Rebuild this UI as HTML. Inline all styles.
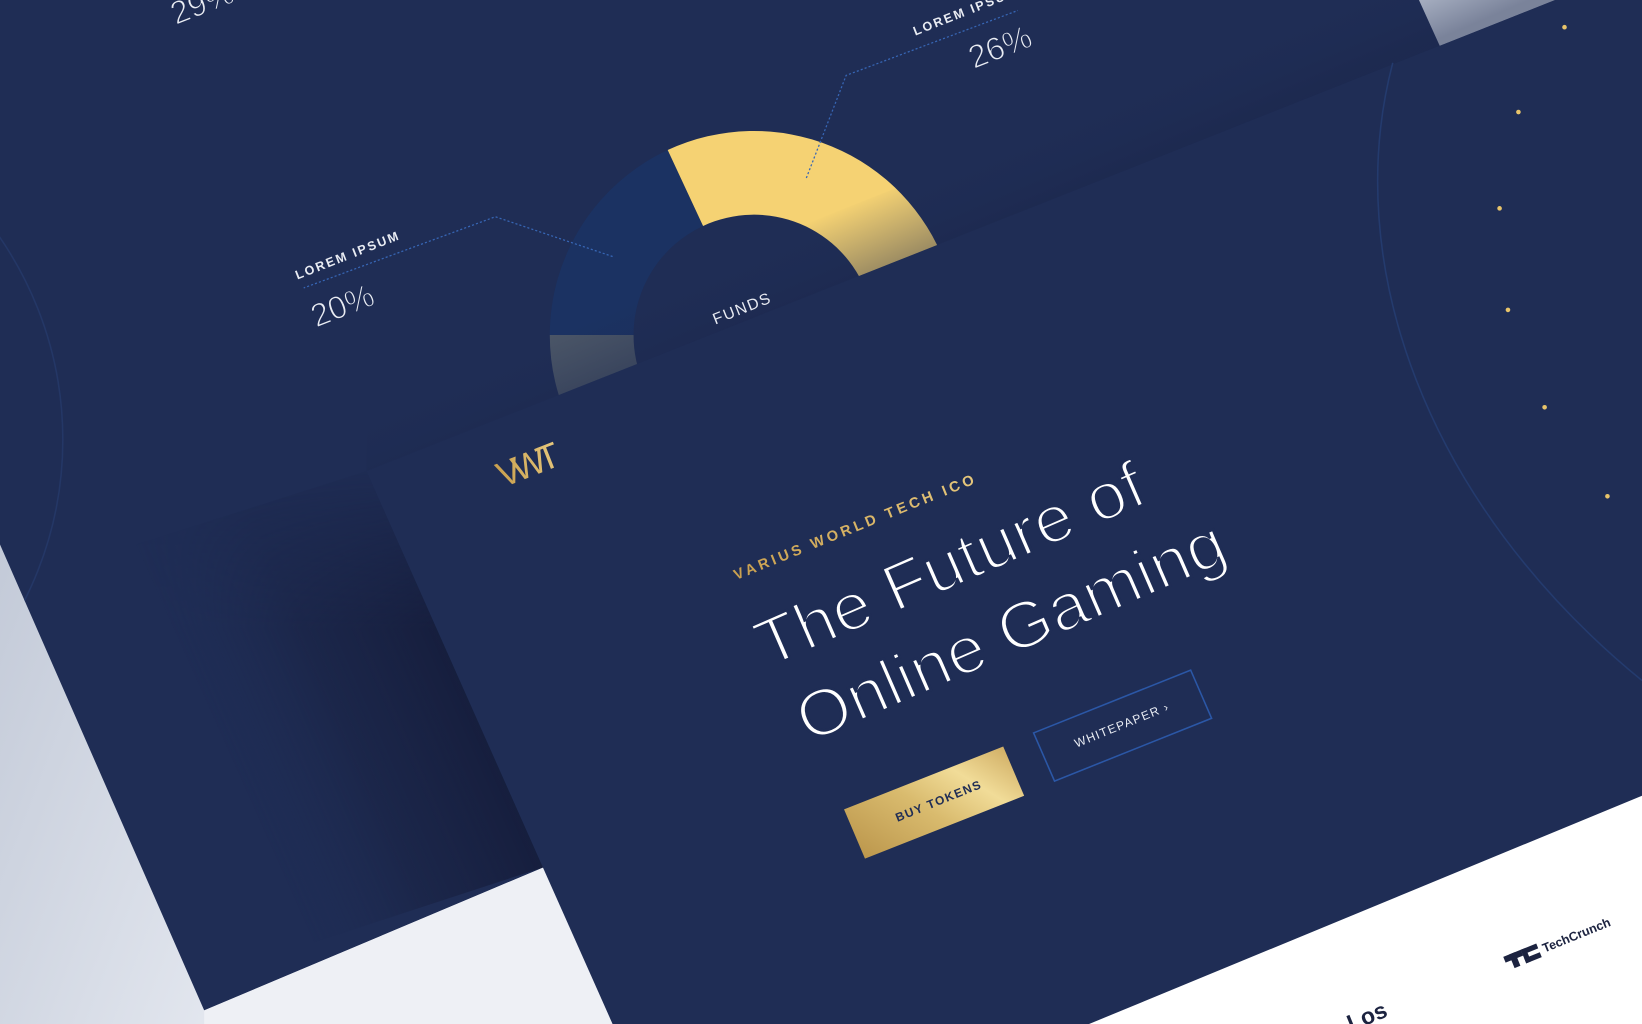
<!DOCTYPE html>
<html><head><meta charset="utf-8"><style>
html,body{margin:0;padding:0;background:#1f2d55;overflow:hidden}
svg{display:block}
text{font-family:"Liberation Sans",sans-serif}
</style></head><body>
<svg width="1642" height="1024" viewBox="0 0 1568 978" preserveAspectRatio="none" xmlns="http://www.w3.org/2000/svg">
<defs>
<linearGradient id="light" x1="0" y1="0" x2="1" y2="0.3">
<stop offset="0" stop-color="#c3cad8"/><stop offset="0.6" stop-color="#e3e7ef"/><stop offset="1" stop-color="#f3f4f8"/>
</linearGradient>
<linearGradient id="gold" x1="0" y1="1" x2="1" y2="0">
<stop offset="0" stop-color="#b89248"/><stop offset="0.45" stop-color="#d9bb6e"/><stop offset="0.7" stop-color="#f1dc98"/><stop offset="1" stop-color="#c9a45a"/>
</linearGradient>
<linearGradient id="goldt" x1="0" y1="0" x2="1" y2="0">
<stop offset="0" stop-color="#c9a04f"/><stop offset="1" stop-color="#e6c77c"/>
</linearGradient>
<linearGradient id="shade" gradientUnits="userSpaceOnUse" x1="435" y1="640" x2="220" y2="735">
<stop offset="0" stop-color="#151c3a" stop-opacity="0.85"/><stop offset="0.5" stop-color="#18203f" stop-opacity="0.5"/><stop offset="1" stop-color="#1f2d55" stop-opacity="0"/>
</linearGradient>
<linearGradient id="fadein" gradientUnits="userSpaceOnUse" x1="0" y1="440" x2="0" y2="600">
<stop offset="0" stop-color="#fff" stop-opacity="0"/><stop offset="1" stop-color="#fff" stop-opacity="1"/>
</linearGradient>
<mask id="m"><rect width="1568" height="978" fill="url(#fadein)"/></mask>
<linearGradient id="topshade" gradientUnits="userSpaceOnUse" x1="900" y1="240" x2="870" y2="170">
<stop offset="0" stop-color="#1a2549" stop-opacity="0.9"/><stop offset="1" stop-color="#1f2d55" stop-opacity="0"/>
</linearGradient>
<clipPath id="back"><polygon points="0,0 1568,0 1568,978 520,828 195,965 0,520"/></clipPath>
</defs>

<rect width="1568" height="978" fill="#1f2d55"/>
<polygon points="0,520 195,965 520,828 585,978 0,978" fill="url(#light)"/>
<polygon points="195,965 520,828 585,978 195,978" fill="#eef0f5"/>
<polygon points="1355,0 1485,0 1375,44" fill="#c9d0dd"/>

<g clip-path="url(#back)">
<circle cx="-280" cy="420" r="340" fill="none" stroke="#243766" stroke-width="1.5"/>
<g transform="translate(720,320)">
<path d="M -195 0 A 195 195 0 0 1 -82.4 -176.7 L -48.6 -104.2 A 115 115 0 0 0 -115 0 Z" fill="#1b3262"/>
<path d="M -82.4 -176.7 A 195 195 0 0 1 183 -67 L 108 -39.5 A 115 115 0 0 0 -48.6 -104.2 Z" fill="#f5d273"/>
<path d="M -195 0 A 195 195 0 0 0 -169 97 L -99.6 57.5 A 115 115 0 0 1 -115 0 Z" fill="#4b5667"/>
</g>
<polygon points="350,450 1485,0 1485,-70 350,380" fill="url(#topshade)" opacity="0.5"/>
<text x="683" y="310" fill="#e9ecf3" font-size="15" letter-spacing="1.5" transform="rotate(-21.5 683 310)">FUNDS</text>
<polyline points="585,245 473,207 290,275" fill="none" stroke="#3766b5" stroke-width="1.2" stroke-dasharray="2 2"/>
<polyline points="770,170 808,72 972,10" fill="none" stroke="#3766b5" stroke-width="1.2" stroke-dasharray="2 2"/>
<text x="284" y="267" fill="#e9ecf3" font-size="12" font-weight="bold" letter-spacing="2" transform="rotate(-21.5 284 267)">LOREM IPSUM</text>
<text x="302" y="313" fill="#e9ecf3" stroke="#1f2d55" stroke-width="1" font-size="31" transform="rotate(-21.5 302 313)">20%</text>
<text x="874" y="34" fill="#e9ecf3" font-size="12" font-weight="bold" letter-spacing="2" transform="rotate(-21.5 874 34)">LOREM IPSUM</text>
<text x="930" y="66" fill="#e9ecf3" stroke="#1f2d55" stroke-width="1" font-size="31" transform="rotate(-21.5 930 66)">26%</text>
<text x="168" y="24" fill="#e9ecf3" stroke="#1f2d55" stroke-width="1" font-size="31" transform="rotate(-21.5 168 24)">29%</text>
<polygon points="350,450 520,828 300,900 130,520" fill="url(#shade)" mask="url(#m)"/>
</g>

<polygon points="350,450 1485,0 1568,0 1568,760 1040,978 585,978" fill="#1f2d55"/>
<polygon points="1040,978 1568,760 1568,978" fill="#ffffff"/>
<path d="M1330 60 C1280 250 1360 480 1568 650" fill="none" stroke="#243b6e" stroke-width="1.5"/>
<g fill="#e8c46a">
<circle cx="1494" cy="26" r="2.2"/><circle cx="1450" cy="107" r="2.2"/><circle cx="1432" cy="199" r="2.2"/>
<circle cx="1440" cy="296" r="2.2"/><circle cx="1475" cy="389" r="2.2"/><circle cx="1535" cy="474" r="2.2"/>
</g>

<text x="480" y="466" fill="url(#goldt)" font-size="34" font-family="Liberation Serif" letter-spacing="-7" transform="rotate(-21.5 480 466)">VWT</text>

<text x="703" y="554" fill="url(#goldt)" font-size="14" font-weight="bold" letter-spacing="4" textLength="250" transform="rotate(-22 703 554)">VARIUS WORLD TECH ICO</text>
<g fill="#ffffff" stroke="#1f2d55" stroke-width="2.5" font-size="63">
<text x="733" y="638" textLength="398" lengthAdjust="spacingAndGlyphs" transform="rotate(-23.5 733 638)">The Future of</text>
<text x="772" y="710" textLength="440" lengthAdjust="spacingAndGlyphs" transform="rotate(-23.5 772 710)">Online Gaming</text>
</g>

<polygon points="806,773 958,713 978,760 826,820" fill="url(#gold)"/>
<text x="857" y="785" fill="#1f2d55" font-size="11.5" font-weight="bold" letter-spacing="1.3" transform="rotate(-22 857 785)">BUY TOKENS</text>
<polygon points="987,700 1137,640 1157,686 1007,746" fill="none" stroke="#2b57a6" stroke-width="1.5"/>
<text x="1028" y="714" fill="#e9ecf3" font-size="11.5" letter-spacing="1.2" transform="rotate(-22 1028 714)">WHITEPAPER  ›</text>

<g transform="rotate(-22 1440 925)">
<rect x="1440" y="913" width="18" height="6" fill="#1c2340"/><rect x="1446" y="913" width="6" height="14" fill="#1c2340"/>
<rect x="1458" y="913" width="16" height="5" fill="#1c2340"/><rect x="1458" y="913" width="5" height="14" fill="#1c2340"/><rect x="1458" y="922" width="16" height="5" fill="#1c2340"/>
<text x="1478" y="924" fill="#1c2340" font-size="12" font-weight="bold">TechCrunch</text>
</g>
<text x="1290" y="985" fill="#1c2340" font-size="22" font-family="Liberation Serif" font-weight="bold" transform="rotate(-22 1290 985)">Los</text>
</svg>
</body></html>
